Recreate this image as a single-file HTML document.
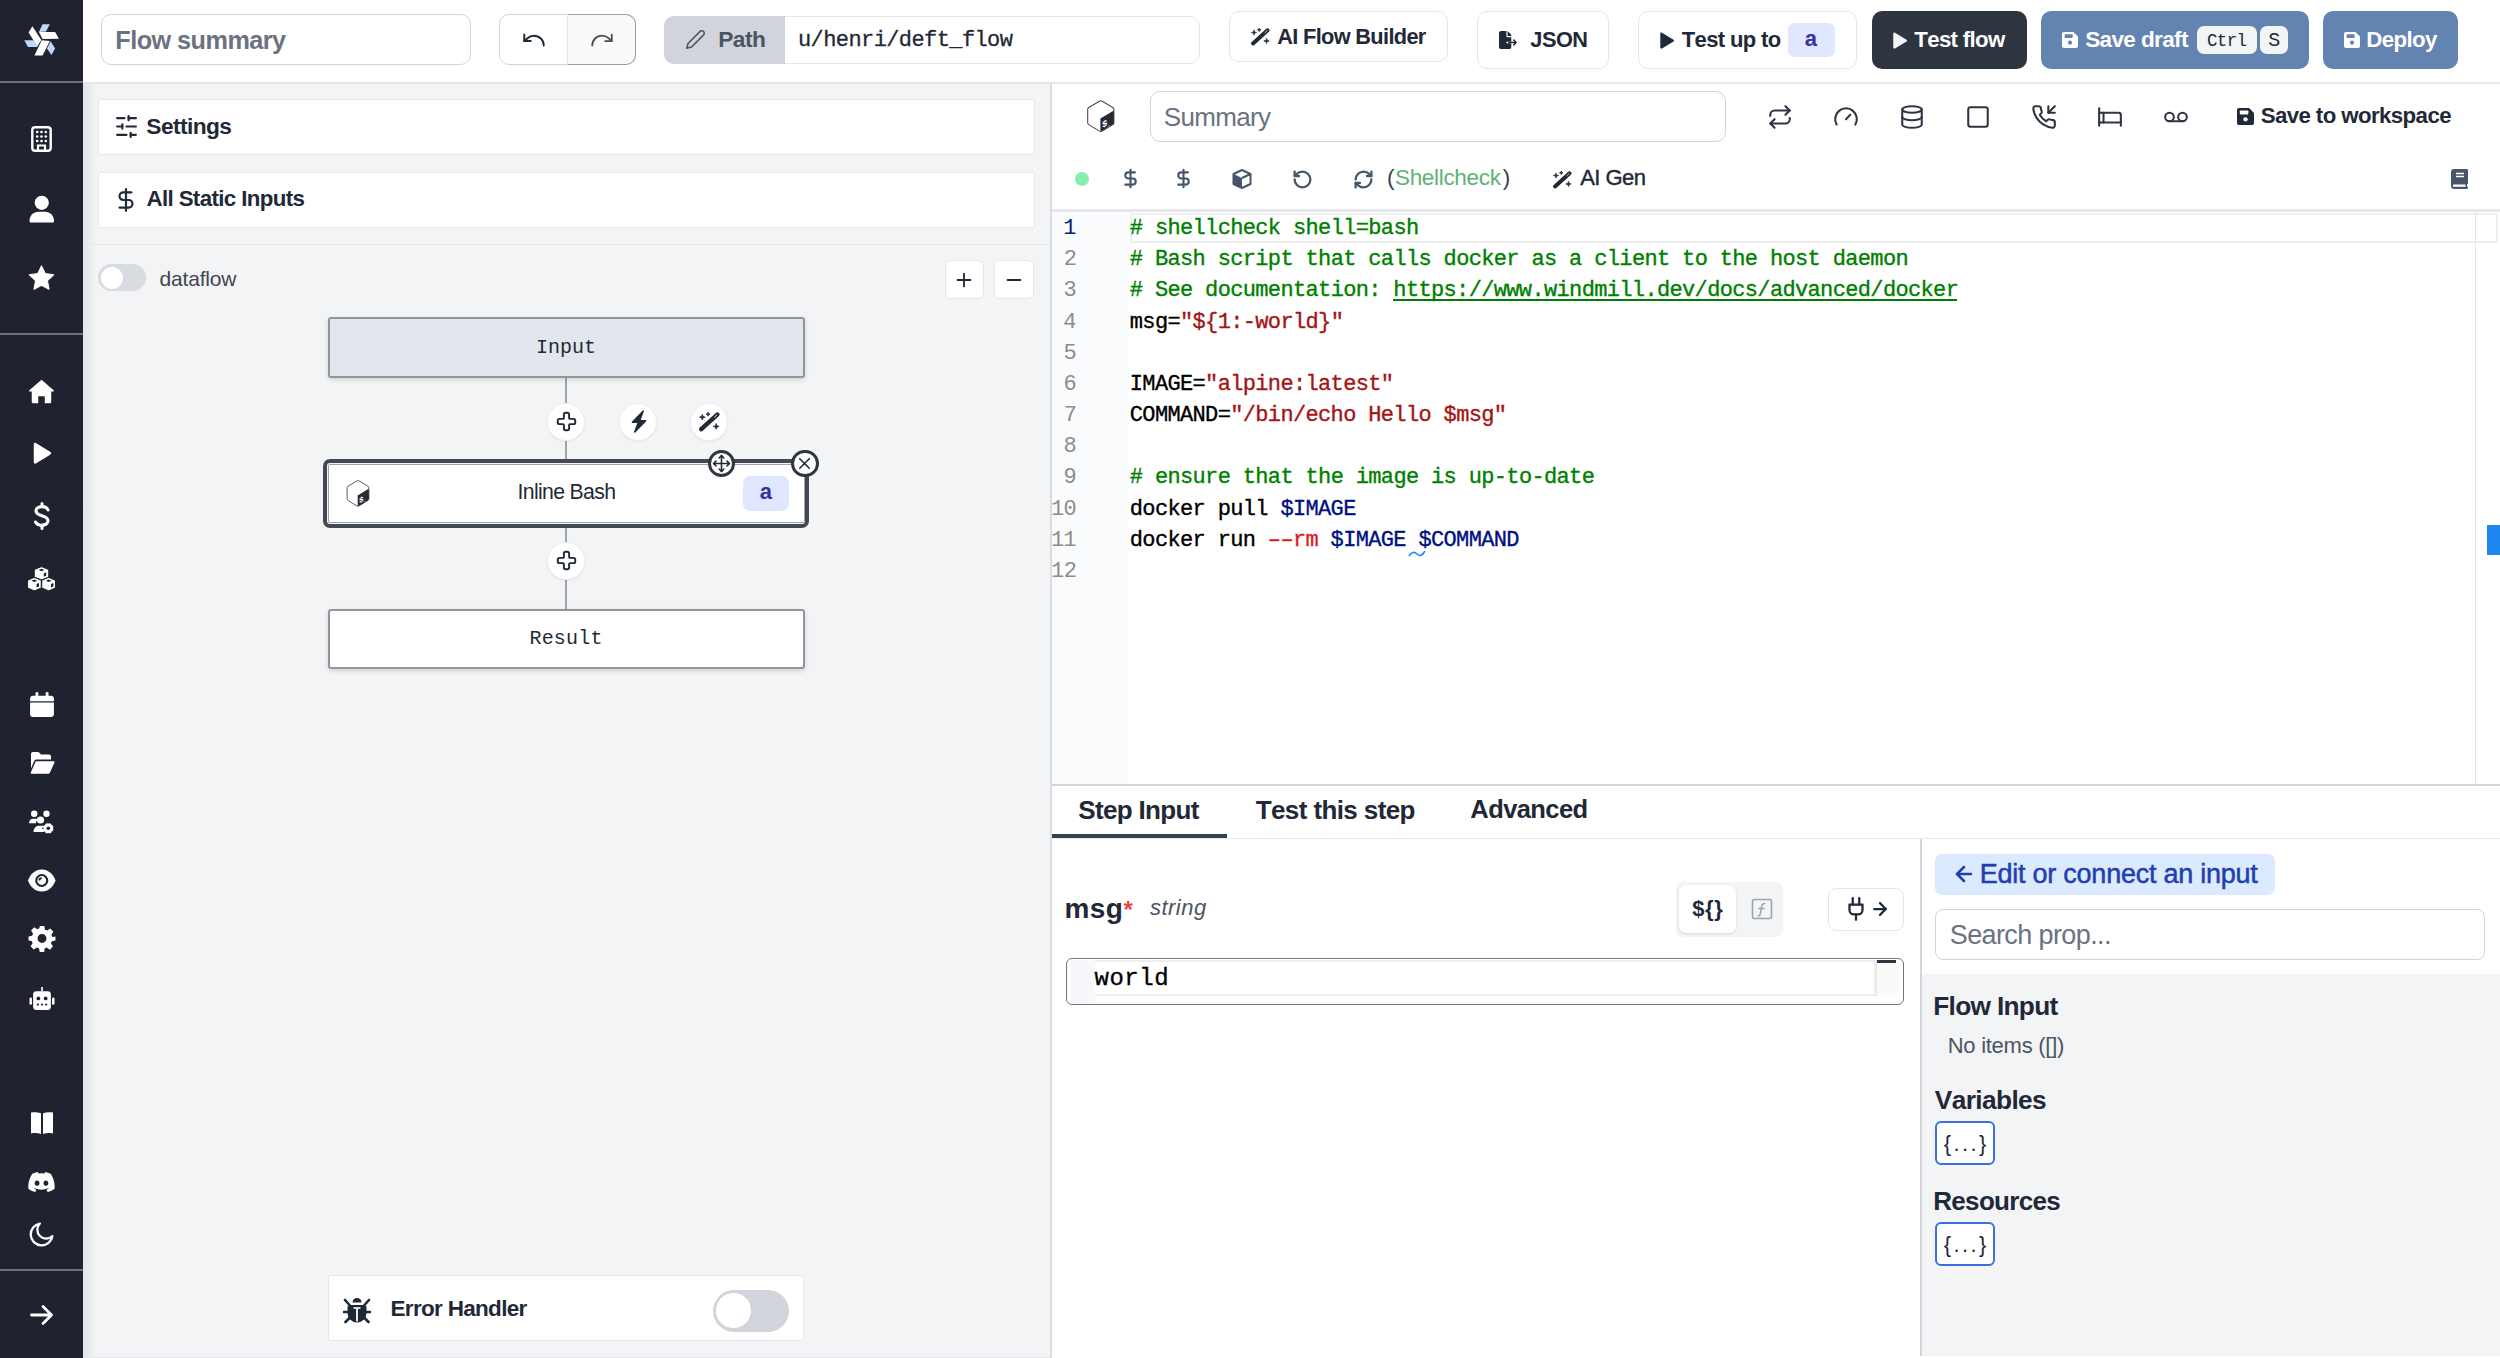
<!DOCTYPE html>
<html><head><meta charset="utf-8"><title>Flow editor</title>
<style>
*{margin:0;padding:0;box-sizing:border-box}
html,body{width:2500px;height:1358px;overflow:hidden;background:#fff;font-family:"Liberation Sans",sans-serif}
.t{position:absolute;white-space:pre;font-kerning:none}
.r{position:absolute;display:block}
</style></head><body>

<div class="r" style="left:0px;top:0px;width:2500px;height:1358px;background:#fff"></div>
<div class="r" style="left:83px;top:83px;width:967px;height:1275px;background:#f3f4f6"></div>
<div class="r" style="left:83px;top:83px;width:14px;height:1275px;background:linear-gradient(to right,rgba(0,0,0,.06),rgba(0,0,0,0))"></div>
<div class="r" style="left:1921px;top:974px;width:579px;height:382px;background:#f3f4f6"></div>
<div class="r" style="left:83px;top:82px;width:2417px;height:2px;background:#e5e7eb"></div>
<div class="r" style="left:1050px;top:84px;width:2px;height:1274px;background:#d9dce1"></div>
<div class="r" style="left:0px;top:0px;width:83px;height:1358px;background:#1f2330"></div>
<div class="r" style="left:0px;top:81px;width:83px;height:2px;background:#6b7080"></div>
<div class="r" style="left:0px;top:333px;width:83px;height:2px;background:#6b7080"></div>
<div class="r" style="left:0px;top:1269px;width:83px;height:2px;background:#6b7080"></div>
<svg class="r" style="left:15px;top:15px;width:55px;height:55px;" viewBox="0 0 1358 1358">
<g fill="#ffffff">
<polygon points="590,420 990,420 1085,585 680,595"/>
<polygon points="335,430 430,280 650,615 550,770"/>
<polygon points="660,625 860,640 680,1000 480,1000"/>
</g>
<g fill="#c4d7f7">
<polygon points="590,420 680,230 860,230 765,410"/>
<polygon points="230,625 470,625 560,790 320,790"/>
<polygon points="790,830 880,650 990,830 900,985"/>
</g></svg>
<svg class="r" style="left:31.0px;top:126.2px;width:21.0px;height:25.999999999999986px;" viewBox="0 0 21 26"><rect x="1.3" y="1.3" width="18.4" height="23.4" rx="2.8" fill="none" stroke="#fff" stroke-width="2.4"/>
<g fill="#fff"><circle cx="6.2" cy="6" r="1.3"/><circle cx="10.5" cy="6" r="1.3"/><circle cx="14.8" cy="6" r="1.3"/>
<circle cx="6.2" cy="10.5" r="1.3"/><circle cx="10.5" cy="10.5" r="1.3"/><circle cx="14.8" cy="10.5" r="1.3"/>
<circle cx="6.2" cy="15" r="1.3"/><circle cx="10.5" cy="15" r="1.3"/><circle cx="14.8" cy="15" r="1.3"/></g>
<path d="M7 25V19.5h7V25" fill="none" stroke="#fff" stroke-width="2.2"/></svg>
<svg class="r" style="left:28.75px;top:194.5px;width:25.5px;height:29.0px;" viewBox="0 0 25.5 28"><circle cx="12.75" cy="7.3" r="7.1" fill="#fff"/><path d="M0.5 25.5C0.5 20 4.5 16.2 9.5 16.2h6.5c5 0 9 3.8 9 9.3 0 1-.6 1.6-1.5 1.6H2c-.9 0-1.5-.6-1.5-1.6z" fill="#fff"/></svg>
<svg class="r" style="left:28.0px;top:264.6px;width:27.0px;height:26.0px;" viewBox="0 0 24 24"><path d="M12 0.8l3.4 7.1 7.8 1.1-5.7 5.5 1.4 7.8L12 18.6l-6.9 3.7 1.4-7.8L0.8 9l7.8-1.1z" fill="#fff" stroke="#fff" stroke-width="1" stroke-linejoin="round"/></svg>
<svg class="r" style="left:27.0px;top:377.5px;width:29.0px;height:26.0px;" viewBox="0 0 24 24"><path d="M12 1.5L0.8 11.2c-.5.5-.2 1.3.5 1.3H3V22c0 .8.6 1.4 1.4 1.4H9v-6.5h6v6.5h4.6c.8 0 1.4-.6 1.4-1.4v-9.5h1.7c.7 0 1-.8.5-1.3z" fill="#fff"/></svg>
<svg class="r" style="left:30.5px;top:440.2px;width:22.0px;height:26.0px;" viewBox="0 0 24 24"><path d="M3 2.2C3 1 4.3.3 5.3 1l16 10c.9.6.9 1.9 0 2.5l-16 10c-1 .6-2.3-.1-2.3-1.3z" fill="#fff"/></svg>
<svg class="r" style="left:32.8px;top:501.8px;width:18.0px;height:27.999999999999943px;" viewBox="0 0 18 28"><path d="M9 1.5v3M9 23.5v3" stroke="#fff" stroke-width="3" stroke-linecap="round"/><path d="M15 8C14.2 6 12.2 4.6 9 4.6c-3.6 0-6 1.8-6 4.4 0 6 12 3.3 12 9.6 0 2.7-2.5 4.6-6.2 4.6-3 0-5.3-1.2-6.2-3.2" fill="none" stroke="#fff" stroke-width="3.1" stroke-linecap="round"/></svg>
<svg class="r" style="left:27.2px;top:565.55px;width:29.000000000000004px;height:25.5px;" viewBox="0 0 29 25.5"><g fill="#fff" stroke="#1f2330" stroke-width="1.1" stroke-linejoin="round">
<path d="M14.5 0.6 21.8 3.6v7.6l-7.3 2.9-7.3-2.9V3.6z"/>
<path d="M7.3 11.3 14.3 14.3v7.7L7.3 24.9 0.5 22v-7.7z"/>
<path d="M21.7 11.3 28.5 14.3v7.7l-6.8 2.9-7-2.9v-7.7z"/></g>
<g fill="#1f2330"><path d="M14.5 2.8 17.4 4 14.5 5.2 11.6 4z"/><path d="M16.8 7.2 19.2 6.2v3.6l-2.4 1z"/>
<path d="M7.3 13.5 10.2 14.7 7.3 15.9 4.4 14.7z"/><path d="M9.6 17.9 12 16.9v3.6l-2.4 1z"/>
<path d="M21.7 13.5 24.6 14.7 21.7 15.9 18.8 14.7z"/><path d="M24 17.9 26.4 16.9v3.6l-2.4 1z"/></g></svg>
<svg class="r" style="left:28.5px;top:689.5px;width:26.0px;height:29.0px;" viewBox="0 0 24 24"><g fill="#fff"><rect x="6" y="0.5" width="2.6" height="5" rx="1.2"/><rect x="15.4" y="0.5" width="2.6" height="5" rx="1.2"/><path d="M1 6.5c0-1.4 1.1-2.5 2.5-2.5h17c1.4 0 2.5 1.1 2.5 2.5V9H1z"/><path d="M1 10.2h22v10.8c0 1.4-1.1 2.5-2.5 2.5h-17C2.1 23.5 1 22.4 1 21z"/></g></svg>
<svg class="r" style="left:26.5px;top:751.0px;width:30.0px;height:24.0px;" viewBox="0 0 24 24"><g fill="#fff"><path d="M1 3c0-1.1.9-2 2-2h5.5l2.5 2.5h8c1.1 0 2 .9 2 2v3H6.5c-1 0-1.9.6-2.3 1.5L1 17.5z"/><path d="M5.8 10.2h17.7c.8 0 1.3.8.9 1.5l-4.6 10c-.3.6-1 1-1.7 1H1.5c-.6 0-1-.6-.7-1.2z"/></g></svg>
<svg class="r" style="left:27.0px;top:809.5px;width:29.0px;height:25.0px;" viewBox="0 0 25 25"><g fill="#fff"><circle cx="5.2" cy="3.8" r="3.2"/><circle cx="17.5" cy="3.8" r="3.2"/><path d="M0 13c0-2.5 1.8-4.3 4-4.3h2.6c.8 0 1.5.2 2.1.6-1 1-1.6 2.4-1.6 3.9H0z"/>
<circle cx="11.5" cy="10" r="3.6"/><path d="M4.5 22c0-3.6 2.6-6.3 5.6-6.3h3.4c.5 0 1 .1 1.5.2-.4 1.8 0 3.8 1.3 5.3-.5.3-.7.6-.7.8z"/>
<circle cx="19.3" cy="18.3" r="5.2"/></g><circle cx="19.3" cy="18.3" r="1.8" fill="#1f2330"/>
<g stroke="#1f2330" stroke-width="1.3"><path d="M19.3 12.2v1.4M19.3 23v1.4M13.2 18.3h1.4M24 18.3h1.4M15 14l1 1M22.6 21.6l1 1M15 22.6l1-1M22.6 15l1-1"/></g></svg>
<svg class="r" style="left:26.75px;top:866.5px;width:29.5px;height:27.0px;" viewBox="0 0 24 22"><path d="M12 2C6.5 2 2.5 6 0.8 11c1.7 5 5.7 9 11.2 9s9.5-4 11.2-9C21.5 6 17.5 2 12 2z" fill="#fff"/><circle cx="12" cy="11" r="5.3" fill="#1f2330"/><circle cx="12" cy="11" r="3.6" fill="#fff"/><path d="M10 11a2 2 0 0 1 2-2" stroke="#1f2330" stroke-width="1.4" fill="none"/></svg>
<svg class="r" style="left:27.5px;top:925.4px;width:28.0px;height:28.0px;" viewBox="0 0 24 25"><path fill="#fff" fill-rule="evenodd" d="M10 1h4l.7 3.2 1.9.8 2.8-1.8 2.8 2.8-1.8 2.8.8 1.9L24 10.2v3.6l-3.2.7-.8 1.9 1.8 2.8-2.8 2.8-2.8-1.8-1.9.8L14 24h-4l-.7-3.2-1.9-.8-2.8 1.8-2.8-2.8 1.8-2.8-.8-1.9L0 13.8v-3.6l3.2-.7.8-1.9L2.2 4.8 5 2l2.8 1.8 1.9-.8zM12 8a4 4 0 1 0 0 8 4 4 0 0 0 0-8z"/></svg>
<svg class="r" style="left:26.5px;top:986.8px;width:30.0px;height:24.0px;" viewBox="0 0 24 23"><g fill="#fff"><rect x="11.2" y="0" width="1.6" height="4"/><rect x="3.5" y="4" width="17" height="18" rx="3"/><rect x="0" y="10" width="2.4" height="7" rx="1.2"/><rect x="21.6" y="10" width="2.4" height="7" rx="1.2"/></g><g fill="#1f2330"><circle cx="8.5" cy="11" r="1.8"/><circle cx="15.5" cy="11" r="1.8"/><rect x="7" y="16" width="2" height="1.6"/><rect x="11" y="16" width="2" height="1.6"/><rect x="15" y="16" width="2" height="1.6"/></g></svg>
<svg class="r" style="left:26.7px;top:1111.0px;width:30.000000000000004px;height:24.0px;" viewBox="0 0 24 24"><g fill="#fff"><path d="M1 1.5c3.5-.6 7-.4 10 .8V23c-3-1.1-6.5-1.3-10-.6z"/><path d="M13 2.3c3-1.2 6.5-1.4 10-.8v20.9c-3.5-.7-7-.5-10 .6z"/></g></svg>
<svg class="r" style="left:28.2px;top:1171.9px;width:27.000000000000004px;height:21.0px;" viewBox="0 0 24 19"><path fill="#fff" d="M20.3 1.6A19.6 19.6 0 0 0 15.4 0c-.2.4-.5.9-.6 1.3a18.3 18.3 0 0 0-5.5 0C9.1.9 8.8.4 8.6 0 6.9.3 5.2.8 3.7 1.6 .6 6.3-.3 10.8.1 15.2c2 1.5 4 2.4 6 3 .5-.6.9-1.3 1.3-2-.7-.3-1.4-.6-2-1l.5-.4c3.9 1.8 8.2 1.8 12.1 0l.5.4c-.6.4-1.3.7-2 1 .4.7.8 1.4 1.3 2 2-.6 4-1.5 6-3 .5-5.1-.9-9.6-3.5-13.6zM8 12.5c-1.2 0-2.2-1.1-2.2-2.4S6.8 7.7 8 7.7s2.2 1.1 2.2 2.4-1 2.4-2.2 2.4zm8 0c-1.2 0-2.2-1.1-2.2-2.4s1-2.4 2.2-2.4 2.2 1.1 2.2 2.4-1 2.4-2.2 2.4z"/></svg>
<svg class="r" style="left:29.2px;top:1221.9px;width:25.000000000000004px;height:25.0px;" viewBox="0 0 24 24"><path d="M10.5 1.5A10.5 10.5 0 1 0 22.5 13.5 8 8 0 0 1 10.5 1.5z" fill="none" stroke="#fff" stroke-width="2.2" stroke-linejoin="round"/></svg>
<svg class="r" style="left:28.7px;top:1303.5px;width:26.000000000000004px;height:22.0px;" viewBox="0 0 24 22"><path d="M1.5 11h20M13 2.5l8.5 8.5-8.5 8.5" fill="none" stroke="#fff" stroke-width="2.8" stroke-linecap="round" stroke-linejoin="round"/></svg>
<div class="r" style="left:101px;top:14px;width:370px;height:51px;background:#fff;border:1.5px solid #d1d5db;border-radius:10px;"></div>
<div class="t" style="left:115.31px;top:28.03px;font-size:25.25px;line-height:25.25px;color:#6b7280;font-family:'Liberation Sans',sans-serif;font-weight:700;letter-spacing:-0.543px;">Flow summary</div>
<div class="r" style="left:499px;top:14px;width:137px;height:51px;background:#fff;border:1.5px solid #d1d5db;border-radius:10px;"></div>
<div class="r" style="left:567px;top:14px;width:69px;height:51px;background:#fafafa;border:1.5px solid #9a9da3;border-left-color:#e5e7eb;border-radius:0 10px 10px 0"></div>
<svg class="r" style="left:521.0px;top:27.0px;width:26.0px;height:26.0px;" viewBox="0 0 24 24"><g fill="none" stroke="#1f2937" stroke-width="1.8" stroke-linecap="round" stroke-linejoin="round"><path d="M3 7v6h6"/><path d="M21 17a9 9 0 0 0-9-9 9 9 0 0 0-6 2.3L3 13"/></g></svg>
<svg class="r" style="left:588.5px;top:27.0px;width:26.0px;height:26.0px;" viewBox="0 0 24 24"><g fill="none" stroke="#4a4d52" stroke-width="1.7" stroke-linecap="round" stroke-linejoin="round"><path d="M21 7v6h-6"/><path d="M3 17a9 9 0 0 1 9-9 9 9 0 0 1 6 2.3l3 2.7"/></g></svg>
<div class="r" style="left:664px;top:16px;width:536px;height:48px;background:#fff;border:1.5px solid #e5e7eb;border-radius:10px;"></div>
<div class="r" style="left:664px;top:16px;width:121px;height:48px;background:#d1d5db;border-radius:10px 0 0 10px"></div>
<svg class="r" style="left:684.5px;top:29.0px;width:21.0px;height:21.0px;" viewBox="0 0 24 24"><g fill="none" stroke="#4b5563" stroke-width="1.8" stroke-linecap="round" stroke-linejoin="round"><path d="M17 3a2.85 2.83 0 1 1 4 4L7.5 20.5 2 22l1.5-5.5Z"/></g></svg>
<div class="t" style="left:718.18px;top:28.04px;font-size:22.75px;line-height:22.75px;color:#4b5563;font-family:'Liberation Sans',sans-serif;font-weight:700;letter-spacing:-0.555px;">Path</div>
<div class="t" style="left:798.01px;top:30.44px;font-size:22px;line-height:22px;color:#1f2937;font-family:'Liberation Mono',monospace;letter-spacing:-0.595px;-webkit-text-stroke:0.3px #1f2937;">u/henri/deft_flow</div>
<div class="r" style="left:1229px;top:11px;width:219px;height:51px;background:#fff;border:1.5px solid #e5e7eb;border-radius:10px;"></div>
<svg class="r" style="left:1250.5px;top:27.2px;width:19.0px;height:19.000000000000004px;" viewBox="0 0 24 24"><path d="M2.6 20.8 20.9 4.1" stroke="#1f2937" stroke-width="5" stroke-linecap="round"/><path d="M17.6 7.2 20.4 4.6" stroke="#fff" stroke-width="1.1" stroke-linecap="round" opacity=".85"/><g fill="#1f2937" stroke="#1f2937" stroke-width=".9" stroke-linejoin="round"><path d="M3.8 3.7Q3.8 7 7.1 7Q3.8 7 3.8 10.3Q3.8 7 0.5 7Q3.8 7 3.8 3.7Z"/><path d="M10.4 1.3000000000000003Q10.4 3.6 12.7 3.6Q10.4 3.6 10.4 5.9Q10.4 3.6 8.100000000000001 3.6Q10.4 3.6 10.4 1.3000000000000003Z"/><path d="M19.6 14.200000000000001Q19.6 17.6 23.0 17.6Q19.6 17.6 19.6 21.0Q19.6 17.6 16.200000000000003 17.6Q19.6 17.6 19.6 14.200000000000001Z"/></g></svg>
<div class="t" style="left:1277.16px;top:25.79px;font-size:21.75px;line-height:21.75px;color:#1f2937;font-family:'Liberation Sans',sans-serif;font-weight:700;letter-spacing:-0.652px;">AI Flow Builder</div>
<div class="r" style="left:1477px;top:11px;width:132px;height:58px;background:#fff;border:1.5px solid #e5e7eb;border-radius:10px;"></div>
<svg class="r" style="left:1498px;top:31px;width:20px;height:18px;" viewBox="0 0 24 22"><path fill="#1f2937" d="M1 2.5C1 1.1 2.1 0 3.5 0H10v6c0 .8.7 1.5 1.5 1.5H16v5.5h-5.2a1 1 0 0 0 0 2H16V19.5c0 1.4-1.1 2.5-2.5 2.5h-10C2.1 22 1 20.9 1 19.5z"/><path fill="#1f2937" d="M11.5 0 16 4.5v1.5h-4.5z"/><path d="M13 14h9m-3-3 3 3-3 3" fill="none" stroke="#1f2937" stroke-width="1.8" stroke-linecap="round" stroke-linejoin="round"/></svg>
<div class="t" style="left:1530.37px;top:29.19px;font-size:21.75px;line-height:21.75px;color:#1f2937;font-family:'Liberation Sans',sans-serif;font-weight:700;letter-spacing:-0.511px;">JSON</div>
<div class="r" style="left:1638px;top:11px;width:219px;height:58px;background:#fff;border:1.5px solid #e5e7eb;border-radius:10px;"></div>
<svg class="r" style="left:1659px;top:31.5px;width:16px;height:17.299999999999997px;" viewBox="0 0 16 18"><path d="M1 1.8C1 .9 2 .3 2.8.8l12 7.3c.7.4.7 1.5 0 1.9l-12 7.3C2 17.7 1 17.1 1 16.2z" fill="#1f2937"/></svg>
<div class="t" style="left:1681.75px;top:28.98px;font-size:22.0px;line-height:22.0px;color:#1f2937;font-family:'Liberation Sans',sans-serif;font-weight:700;letter-spacing:-0.633px;">Test up to</div>
<div class="r" style="left:1788px;top:23px;width:47px;height:33.7px;background:#e0e7ff;border:0px solid #e0e7ff;border-radius:7px;"></div>
<div class="t" style="left:1804.86px;top:28.18px;font-size:22px;line-height:22px;color:#3730a3;font-family:'Liberation Sans',sans-serif;font-weight:700;">a</div>
<div class="r" style="left:1871.5px;top:11px;width:155.5px;height:58px;background:#2e3440;border:0px solid #2e3440;border-radius:10px;"></div>
<svg class="r" style="left:1892px;top:31.5px;width:16px;height:17.299999999999997px;" viewBox="0 0 16 18"><path d="M1 1.8C1 .9 2 .3 2.8.8l12 7.3c.7.4.7 1.5 0 1.9l-12 7.3C2 17.7 1 17.1 1 16.2z" fill="#f3f4f6"/></svg>
<div class="t" style="left:1914.25px;top:28.77px;font-size:22.25px;line-height:22.25px;color:#ffffff;font-family:'Liberation Sans',sans-serif;font-weight:700;letter-spacing:-0.664px;">Test flow</div>
<div class="r" style="left:2041px;top:11px;width:268px;height:58px;background:#6384b1;border:0px solid #6384b1;border-radius:10px;"></div>
<svg class="r" style="left:2061px;top:32px;width:18px;height:16px;" viewBox="0 0 18 18"><path fill="#ffffff" d="M0 2.2C0 1 1 0 2.2 0h10.6L18 5.2v10.6c0 1.2-1 2.2-2.2 2.2H2.2C1 18 0 17 0 15.8z"/><rect x="3" y="2.6" width="9" height="4.2" rx=".8" fill="#6384b1"/><circle cx="9" cy="12" r="2.3" fill="#6384b1"/></svg>
<div class="t" style="left:2085.15px;top:28.55px;font-size:22.5px;line-height:22.5px;color:#ffffff;font-family:'Liberation Sans',sans-serif;font-weight:700;letter-spacing:-0.608px;">Save draft</div>
<div class="r" style="left:2197px;top:26px;width:60px;height:28px;background:#f3f4f6;border:0px solid #f3f4f6;border-radius:7px;"></div>
<div class="t" style="left:2207.03px;top:33.09px;font-size:17.5px;line-height:17.5px;color:#1f2937;font-family:'Liberation Mono',monospace;letter-spacing:-0.692px;">Ctrl</div>
<div class="r" style="left:2260px;top:26px;width:28px;height:28px;background:#f3f4f6;border:0px solid #f3f4f6;border-radius:7px;"></div>
<div class="t" style="left:2268.23px;top:31.18px;font-size:20px;line-height:20px;color:#1f2937;font-family:'Liberation Mono',monospace;">S</div>
<div class="r" style="left:2323px;top:11px;width:135px;height:58px;background:#6384b1;border:0px solid #6384b1;border-radius:10px;"></div>
<svg class="r" style="left:2343px;top:32px;width:18px;height:16px;" viewBox="0 0 18 18"><path fill="#ffffff" d="M0 2.2C0 1 1 0 2.2 0h10.6L18 5.2v10.6c0 1.2-1 2.2-2.2 2.2H2.2C1 18 0 17 0 15.8z"/><rect x="3" y="2.6" width="9" height="4.2" rx=".8" fill="#6384b1"/><circle cx="9" cy="12" r="2.3" fill="#6384b1"/></svg>
<div class="t" style="left:2366.21px;top:28.77px;font-size:22.25px;line-height:22.25px;color:#ffffff;font-family:'Liberation Sans',sans-serif;font-weight:700;letter-spacing:-0.595px;">Deploy</div>
<div class="r" style="left:98px;top:99px;width:936.5px;height:56px;background:#fff;border:1.5px solid #e5e7eb;border-radius:3px;"></div>
<svg class="r" style="left:113.5px;top:114.0px;width:25.0px;height:25.0px;" viewBox="0 0 24 24"><g fill="none" stroke="#1f2937" stroke-width="2.1" stroke-linecap="round" stroke-linejoin="round"><line x1="21" x2="14" y1="4" y2="4"/><line x1="10" x2="3" y1="4" y2="4"/><line x1="21" x2="12" y1="12" y2="12"/><line x1="8" x2="3" y1="12" y2="12"/><line x1="21" x2="16" y1="20" y2="20"/><line x1="12" x2="3" y1="20" y2="20"/><line x1="14" x2="14" y1="2" y2="6"/><line x1="8" x2="8" y1="10" y2="14"/><line x1="16" x2="16" y1="18" y2="22"/></g></svg>
<div class="t" style="left:146.34px;top:114.74px;font-size:22.75px;line-height:22.75px;color:#1f2937;font-family:'Liberation Sans',sans-serif;font-weight:700;letter-spacing:-0.594px;">Settings</div>
<div class="r" style="left:98px;top:172px;width:936.5px;height:56px;background:#fff;border:1.5px solid #e5e7eb;border-radius:3px;"></div>
<svg class="r" style="left:113.0px;top:186.5px;width:26.0px;height:26.0px;" viewBox="0 0 24 24"><g fill="none" stroke="#1f2937" stroke-width="2" stroke-linecap="round" stroke-linejoin="round"><line x1="12" x2="12" y1="2" y2="22"/><path d="M17 5H9.5a3.5 3.5 0 0 0 0 7h5a3.5 3.5 0 0 1 0 7H6"/></g></svg>
<div class="t" style="left:146.45px;top:187.87px;font-size:22.25px;line-height:22.25px;color:#1f2937;font-family:'Liberation Sans',sans-serif;font-weight:700;letter-spacing:-0.604px;">All Static Inputs</div>
<div class="r" style="left:83px;top:243.5px;width:967px;height:1.5px;background:#e5e7eb"></div>
<div class="r" style="left:98px;top:264px;width:48px;height:27px;background:#d8dbe0;border-radius:14px"></div>
<div class="r" style="left:100.5px;top:266.5px;width:22px;height:22px;background:#fff;border-radius:11px"></div>
<div class="t" style="left:159.62px;top:267.72px;font-size:21px;line-height:21px;color:#404652;font-family:'Liberation Sans',sans-serif;letter-spacing:-0.198px;">dataflow</div>
<div class="r" style="left:944.5px;top:260px;width:39.5px;height:39px;background:#fff;border:1.5px solid #e5e7eb;border-radius:6px;"></div>
<svg class="r" style="left:953.2px;top:268.5px;width:22.0px;height:22.0px;" viewBox="0 0 24 24"><g fill="none" stroke="#1f2937" stroke-width="2" stroke-linecap="round" stroke-linejoin="round"><path d="M5 12h14"/><path d="M12 5v14"/></g></svg>
<div class="r" style="left:993.5px;top:260px;width:40.0px;height:39px;background:#fff;border:1.5px solid #e5e7eb;border-radius:6px;"></div>
<svg class="r" style="left:1002.5px;top:268.5px;width:22.0px;height:22.0px;" viewBox="0 0 24 24"><g fill="none" stroke="#1f2937" stroke-width="2" stroke-linecap="round" stroke-linejoin="round"><path d="M5 12h14"/></g></svg>
<div class="r" style="left:565.2px;top:377px;width:1.599999999999909px;height:82px;background:#a0a5ad"></div>
<div class="r" style="left:565.2px;top:527px;width:1.599999999999909px;height:82px;background:#a0a5ad"></div>
<div class="r" style="left:328px;top:317px;width:476.5px;height:60.5px;background:#e2e6ed;border:2px solid #91959c;border-radius:3px;box-shadow:0 2px 5px rgba(0,0,0,.14)"></div>
<div class="t" style="left:536.03px;top:337.68px;font-size:20px;line-height:20px;color:#1f2937;font-family:'Liberation Mono',monospace;">Input</div>
<div class="r" style="left:328px;top:609px;width:476.5px;height:59.5px;background:#fff;border:2px solid #91959c;border-radius:3px;box-shadow:0 2px 5px rgba(0,0,0,.14)"></div>
<div class="t" style="left:529.42px;top:629.38px;font-size:20px;line-height:20px;color:#1f2937;font-family:'Liberation Mono',monospace;letter-spacing:0.228px;">Result</div>
<div class="r" style="left:547.00px;top:402.70px;width:38px;height:38px;background:#fff;border:1.5px solid #eceef1;border-radius:50%;box-shadow:0 1px 2px rgba(0,0,0,.06)"></div>
<svg class="r" style="left:555.5px;top:411.2px;width:21.0px;height:21.0px;" viewBox="0 0 24 24"><g fill="none" stroke="#1f2937" stroke-width="2.2" stroke-linecap="round" stroke-linejoin="round"><path d="M4 9a2 2 0 0 0-2 2v2a2 2 0 0 0 2 2h4a1 1 0 0 1 1 1v4a2 2 0 0 0 2 2h2a2 2 0 0 0 2-2v-4a1 1 0 0 1 1-1h4a2 2 0 0 0 2-2v-2a2 2 0 0 0-2-2h-4a1 1 0 0 1-1-1V4a2 2 0 0 0-2-2h-2a2 2 0 0 0-2 2v4a1 1 0 0 1-1 1z"/></g></svg>
<div class="r" style="left:547.00px;top:541.70px;width:38px;height:38px;background:#fff;border:1.5px solid #eceef1;border-radius:50%;box-shadow:0 1px 2px rgba(0,0,0,.06)"></div>
<svg class="r" style="left:555.5px;top:550.2px;width:21.0px;height:21.0px;" viewBox="0 0 24 24"><g fill="none" stroke="#1f2937" stroke-width="2.2" stroke-linecap="round" stroke-linejoin="round"><path d="M4 9a2 2 0 0 0-2 2v2a2 2 0 0 0 2 2h4a1 1 0 0 1 1 1v4a2 2 0 0 0 2 2h2a2 2 0 0 0 2-2v-4a1 1 0 0 1 1-1h4a2 2 0 0 0 2-2v-2a2 2 0 0 0-2-2h-4a1 1 0 0 1-1-1V4a2 2 0 0 0-2-2h-2a2 2 0 0 0-2 2v4a1 1 0 0 1-1 1z"/></g></svg>
<div class="r" style="left:619.00px;top:402.70px;width:38px;height:38px;background:#fff;border:1.5px solid #eceef1;border-radius:50%;box-shadow:0 1px 2px rgba(0,0,0,.06)"></div>
<svg class="r" style="left:629px;top:410px;width:18px;height:23px;" viewBox="0 0 18 23"><path d="M13.8 0.5 3 11.5c-.6.6-.2 1.6.7 1.6h4.6L5 21.8c-.3.8.7 1.4 1.3.8L17 11.6c.6-.6.2-1.6-.7-1.6h-4.6l3.2-8.8c.3-.8-.7-1.4-1.1-.7z" fill="#1f2937"/></svg>
<div class="r" style="left:690.00px;top:402.70px;width:38px;height:38px;background:#fff;border:1.5px solid #eceef1;border-radius:50%;box-shadow:0 1px 2px rgba(0,0,0,.06)"></div>
<svg class="r" style="left:698.5px;top:411.2px;width:21.0px;height:21.0px;" viewBox="0 0 24 24"><path d="M2.6 20.8 20.9 4.1" stroke="#1f2937" stroke-width="5" stroke-linecap="round"/><path d="M17.6 7.2 20.4 4.6" stroke="#fff" stroke-width="1.1" stroke-linecap="round" opacity=".85"/><g fill="#1f2937" stroke="#1f2937" stroke-width=".9" stroke-linejoin="round"><path d="M3.8 3.7Q3.8 7 7.1 7Q3.8 7 3.8 10.3Q3.8 7 0.5 7Q3.8 7 3.8 3.7Z"/><path d="M10.4 1.3000000000000003Q10.4 3.6 12.7 3.6Q10.4 3.6 10.4 5.9Q10.4 3.6 8.100000000000001 3.6Q10.4 3.6 10.4 1.3000000000000003Z"/><path d="M19.6 14.200000000000001Q19.6 17.6 23.0 17.6Q19.6 17.6 19.6 21.0Q19.6 17.6 16.200000000000003 17.6Q19.6 17.6 19.6 14.200000000000001Z"/></g></svg>
<div class="r" style="left:323px;top:459px;width:486px;height:68.5px;border:4px solid #434a55;border-radius:7px"></div>
<div class="r" style="left:327.5px;top:463.5px;width:477.5px;height:59.5px;background:#fff;border:1.5px solid #9ca3af;border-radius:2px;"></div>
<svg class="r" style="left:345.5px;top:479.5px;width:24.0px;height:27.0px;" viewBox="0 0 28 33"><path d="M12.6 1.2Q14 .4 15.4 1.2L26.2 7.6Q27.3 8.3 27.3 9.6V23Q27.3 24.4 26.2 25L15.4 31.6Q14 32.4 12.6 31.6L1.8 25Q.7 24.4 .7 23V9.6Q.7 8.3 1.8 7.6Z" fill="#fff" stroke="#4a4a4a" stroke-width="1.1"/><path d="M13.6 18.8 26 11.4Q27.3 10.7 27.3 12.2V23Q27.3 24.4 26.2 25L15.2 31.6Q13.6 32.5 13.6 30.8Z" fill="#262b33"/><g transform="translate(15.5 28.5) skewY(-28)"><text x="0" y="0" font-family="Liberation Sans" font-size="9" font-weight="700" fill="#fff">$</text></g><path d="M21 27.2 23.6 25.7" stroke="#9aa0a6" stroke-width=".9"/></svg>
<div class="t" style="left:517.54px;top:482.31px;font-size:21.25px;line-height:21.25px;color:#1f2937;font-family:'Liberation Sans',sans-serif;letter-spacing:-0.670px;">Inline Bash</div>
<div class="r" style="left:743px;top:476px;width:46px;height:34.60000000000002px;background:#e0e7ff;border:0px solid #e0e7ff;border-radius:7px;"></div>
<div class="t" style="left:759.86px;top:481.38px;font-size:22px;line-height:22px;color:#3730a3;font-family:'Liberation Sans',sans-serif;font-weight:700;">a</div>
<div class="r" style="left:707.55px;top:449.75px;width:27.5px;height:27.5px;background:#fff;border:3px solid #30363f;border-radius:50%;"></div>
<svg class="r" style="left:711.8px;top:454.0px;width:19.0px;height:19.0px;" viewBox="0 0 24 24"><g fill="none" stroke="#1f2937" stroke-width="2" stroke-linecap="round" stroke-linejoin="round"><polyline points="5 9 2 12 5 15"/><polyline points="9 5 12 2 15 5"/><polyline points="15 19 12 22 9 19"/><polyline points="19 9 22 12 19 15"/><line x1="2" x2="22" y1="12" y2="12"/><line x1="12" x2="12" y1="2" y2="22"/></g></svg>
<div class="r" style="left:791.05px;top:449.75px;width:27.5px;height:27.5px;background:#fff;border:3px solid #30363f;border-radius:50%;"></div>
<svg class="r" style="left:795.1px;top:454.0px;width:19.0px;height:19.0px;" viewBox="0 0 24 24"><g fill="none" stroke="#1f2937" stroke-width="2" stroke-linecap="round" stroke-linejoin="round"><path d="M18 6 6 18"/><path d="m6 6 12 12"/></g></svg>
<div class="r" style="left:328px;top:1275px;width:475.5px;height:66px;background:#fff;border:1.5px solid #e5e7eb;border-radius:3px;"></div>
<svg class="r" style="left:343px;top:1296px;width:28px;height:28px;" viewBox="0 0 28 28"><g fill="#1f2937"><path d="M9.5 6.5a4.5 4.5 0 0 1 9 0z"/><path d="M7 9h14c1.4 0 2.5 1.1 2.5 2.5V17a9.5 9.5 0 0 1-19 0v-5.5C4.5 10.1 5.6 9 7 9z"/></g><g stroke="#1f2937" stroke-width="2.6" stroke-linecap="round"><path d="M2 4l4.5 5M26 4l-4.5 5M1 16h4M27 16h-4M2.5 26l4-4M25.5 26l-4-4"/></g><path d="M14 12.5v13" stroke="#fff" stroke-width="1.8"/><path d="M10.5 12h7" stroke="#fff" stroke-width="1.6"/></svg>
<div class="t" style="left:390.49px;top:1297.95px;font-size:22.5px;line-height:22.5px;color:#1f2937;font-family:'Liberation Sans',sans-serif;font-weight:700;letter-spacing:-0.683px;">Error Handler</div>
<div class="r" style="left:712.5px;top:1290px;width:76.5px;height:42px;background:#d1d5db;border-radius:21px"></div>
<div class="r" style="left:714.5px;top:1292px;width:37px;height:37px;background:#fff;border:1.5px solid #d1d5db;border-radius:50%"></div>
<svg class="r" style="left:1087px;top:100px;width:27.59999999999991px;height:32.5px;" viewBox="0 0 28 33"><path d="M12.6 1.2Q14 .4 15.4 1.2L26.2 7.6Q27.3 8.3 27.3 9.6V23Q27.3 24.4 26.2 25L15.4 31.6Q14 32.4 12.6 31.6L1.8 25Q.7 24.4 .7 23V9.6Q.7 8.3 1.8 7.6Z" fill="#fff" stroke="#4a4a4a" stroke-width="1.1"/><path d="M13.6 18.8 26 11.4Q27.3 10.7 27.3 12.2V23Q27.3 24.4 26.2 25L15.2 31.6Q13.6 32.5 13.6 30.8Z" fill="#262b33"/><g transform="translate(15.5 28.5) skewY(-28)"><text x="0" y="0" font-family="Liberation Sans" font-size="9" font-weight="700" fill="#fff">$</text></g><path d="M21 27.2 23.6 25.7" stroke="#9aa0a6" stroke-width=".9"/></svg>
<div class="r" style="left:1150px;top:91px;width:576px;height:51px;background:#fff;border:1.5px solid #d1d5db;border-radius:10px;"></div>
<div class="t" style="left:1163.82px;top:103.99px;font-size:26.0px;line-height:26.0px;color:#6b7280;font-family:'Liberation Sans',sans-serif;letter-spacing:-0.667px;">Summary</div>
<svg class="r" style="left:1767.4px;top:103.5px;width:26.0px;height:26.0px;" viewBox="0 0 24 24"><g fill="none" stroke="#2e3440" stroke-width="1.9" stroke-linecap="round" stroke-linejoin="round"><path d="m17 2 4 4-4 4"/><path d="M3 11v-1a4 4 0 0 1 4-4h14"/><path d="m7 22-4-4 4-4"/><path d="M21 13v1a4 4 0 0 1-4 4H3"/></g></svg>
<svg class="r" style="left:1833.0px;top:103.5px;width:26.0px;height:26.0px;" viewBox="0 0 24 24"><g fill="none" stroke="#2e3440" stroke-width="1.9" stroke-linecap="round" stroke-linejoin="round"><path d="m12 14 4-4"/><path d="M3.34 19a10 10 0 1 1 17.32 0"/></g></svg>
<svg class="r" style="left:1899.0px;top:103.5px;width:26.0px;height:26.0px;" viewBox="0 0 24 24"><g fill="none" stroke="#2e3440" stroke-width="1.9" stroke-linecap="round" stroke-linejoin="round"><ellipse cx="12" cy="5" rx="9" ry="3"/><path d="M3 5V19A9 3 0 0 0 21 19V5"/><path d="M3 12A9 3 0 0 0 21 12"/></g></svg>
<svg class="r" style="left:1965.0px;top:103.5px;width:26.0px;height:26.0px;" viewBox="0 0 24 24"><g fill="none" stroke="#2e3440" stroke-width="1.9" stroke-linecap="round" stroke-linejoin="round"><rect width="18" height="18" x="3" y="3" rx="2"/></g></svg>
<svg class="r" style="left:2031.0px;top:103.5px;width:26.0px;height:26.0px;" viewBox="0 0 24 24"><g fill="none" stroke="#2e3440" stroke-width="1.9" stroke-linecap="round" stroke-linejoin="round"><polyline points="16 2 16 8 22 8"/><line x1="22" x2="16" y1="2" y2="8"/><path d="M22 16.92v3a2 2 0 0 1-2.18 2 19.79 19.79 0 0 1-8.63-3.07 19.5 19.5 0 0 1-6-6 19.79 19.79 0 0 1-3.07-8.67A2 2 0 0 1 4.11 2h3a2 2 0 0 1 2 1.72 12.84 12.84 0 0 0 .7 2.81 2 2 0 0 1-.45 2.11L8.09 9.91a16 16 0 0 0 6 6l1.27-1.27a2 2 0 0 1 2.11-.45 12.84 12.84 0 0 0 2.81.7A2 2 0 0 1 22 16.92z"/></g></svg>
<svg class="r" style="left:2097.0px;top:103.5px;width:26.0px;height:26.0px;" viewBox="0 0 24 24"><g fill="none" stroke="#2e3440" stroke-width="1.9" stroke-linecap="round" stroke-linejoin="round"><path d="M2 4v16"/><path d="M2 8h18a2 2 0 0 1 2 2v10"/><path d="M2 17h20"/><path d="M6 8v9"/></g></svg>
<svg class="r" style="left:2163.0px;top:103.5px;width:26.0px;height:26.0px;" viewBox="0 0 24 24"><g fill="none" stroke="#2e3440" stroke-width="1.9" stroke-linecap="round" stroke-linejoin="round"><circle cx="6" cy="12" r="4"/><circle cx="18" cy="12" r="4"/><line x1="6" x2="18" y1="16" y2="16"/></g></svg>
<svg class="r" style="left:2237px;top:108px;width:17px;height:17px;" viewBox="0 0 18 18"><path fill="#1f2937" d="M0 2.2C0 1 1 0 2.2 0h10.6L18 5.2v10.6c0 1.2-1 2.2-2.2 2.2H2.2C1 18 0 17 0 15.8z"/><rect x="3" y="2.6" width="9" height="4.2" rx=".8" fill="#fff"/><circle cx="9" cy="12" r="2.3" fill="#fff"/></svg>
<div class="t" style="left:2260.66px;top:104.87px;font-size:22.25px;line-height:22.25px;color:#1f2937;font-family:'Liberation Sans',sans-serif;font-weight:700;letter-spacing:-0.590px;">Save to workspace</div>
<div class="r" style="left:1075.4px;top:172px;width:14px;height:14px;background:#86efac;border-radius:50%"></div>
<svg class="r" style="left:1119.7px;top:168.3px;width:21.0px;height:21.0px;" viewBox="0 0 24 24"><g fill="none" stroke="#475569" stroke-width="2.4" stroke-linecap="round" stroke-linejoin="round"><line x1="12" x2="12" y1="2" y2="22"/><path d="M17 5H9.5a3.5 3.5 0 0 0 0 7h5a3.5 3.5 0 0 1 0 7H6"/></g></svg>
<svg class="r" style="left:1173.4px;top:168.3px;width:21.0px;height:21.0px;" viewBox="0 0 24 24"><g fill="none" stroke="#475569" stroke-width="2.4" stroke-linecap="round" stroke-linejoin="round"><line x1="12" x2="12" y1="2" y2="22"/><path d="M17 5H9.5a3.5 3.5 0 0 0 0 7h5a3.5 3.5 0 0 1 0 7H6"/></g></svg>
<svg class="r" style="left:1231.5px;top:169px;width:20.0px;height:20px;" viewBox="0 0 20 20"><path d="M10 1 18.5 5v10L10 19 1.5 15V5z" fill="#fff" stroke="#475569" stroke-width="2" stroke-linejoin="round"/><path d="M1.5 5 10 9v10L1.5 15z" fill="#475569"/><path d="M10 9 18.5 5" stroke="#475569" stroke-width="2"/></svg>
<svg class="r" style="left:1291.5px;top:168.5px;width:21.0px;height:21.0px;" viewBox="0 0 24 24"><g fill="none" stroke="#475569" stroke-width="2.6" stroke-linecap="round" stroke-linejoin="round"><path d="M3 12a9 9 0 1 0 9-9 9.75 9.75 0 0 0-6.74 2.74L3 8"/><path d="M3 3v5h5"/></g></svg>
<svg class="r" style="left:1353.1px;top:168.5px;width:21.0px;height:21.0px;" viewBox="0 0 24 24"><g fill="none" stroke="#475569" stroke-width="2.6" stroke-linecap="round" stroke-linejoin="round"><path d="M3 12a9 9 0 0 1 9-9 9.75 9.75 0 0 1 6.74 2.74L21 8"/><path d="M21 3v5h-5"/><path d="M21 12a9 9 0 0 1-9 9 9.75 9.75 0 0 1-6.74-2.74L3 16"/><path d="M8 16H3v5"/></g></svg>
<div class="t" style="left:1387.00px;top:166.95px;font-size:22.5px;line-height:22.5px;color:#374151;font-family:'Liberation Sans',sans-serif;">(</div>
<div class="t" style="left:1394.98px;top:166.95px;font-size:22.5px;line-height:22.5px;color:#5cb376;font-family:'Liberation Sans',sans-serif;letter-spacing:-0.313px;">Shellcheck</div>
<div class="t" style="left:1502.87px;top:166.95px;font-size:22.5px;line-height:22.5px;color:#374151;font-family:'Liberation Sans',sans-serif;">)</div>
<svg class="r" style="left:1553.0px;top:169.5px;width:19.0px;height:19.0px;" viewBox="0 0 24 24"><path d="M2.6 20.8 20.9 4.1" stroke="#1f2937" stroke-width="5" stroke-linecap="round"/><path d="M17.6 7.2 20.4 4.6" stroke="#fff" stroke-width="1.1" stroke-linecap="round" opacity=".85"/><g fill="#1f2937" stroke="#1f2937" stroke-width=".9" stroke-linejoin="round"><path d="M3.8 3.7Q3.8 7 7.1 7Q3.8 7 3.8 10.3Q3.8 7 0.5 7Q3.8 7 3.8 3.7Z"/><path d="M10.4 1.3000000000000003Q10.4 3.6 12.7 3.6Q10.4 3.6 10.4 5.9Q10.4 3.6 8.100000000000001 3.6Q10.4 3.6 10.4 1.3000000000000003Z"/><path d="M19.6 14.200000000000001Q19.6 17.6 23.0 17.6Q19.6 17.6 19.6 21.0Q19.6 17.6 16.200000000000003 17.6Q19.6 17.6 19.6 14.200000000000001Z"/></g></svg>
<div class="t" style="left:1580.26px;top:167.38px;font-size:22.0px;line-height:22.0px;color:#1f2937;font-family:'Liberation Sans',sans-serif;letter-spacing:-0.562px;-webkit-text-stroke:0.4px #1f2937;">AI Gen</div>
<svg class="r" style="left:2451px;top:169px;width:18px;height:20px;" viewBox="0 0 18 20"><path d="M3 0h12.5c.8 0 1.5.7 1.5 1.5V14c0 .6-.4 1.2-1 1.4v2.1c.6.2 1 .6 1 1.2 0 .7-.6 1.3-1.3 1.3H3a3 3 0 0 1-3-3V3a3 3 0 0 1 3-3z" fill="#475569"/><path d="M3 15.5h11.5v2.3H3a1.15 1.15 0 0 1 0-2.3z" fill="#fff"/><path d="M5 4.5h8M5 7.5h8" stroke="#fff" stroke-width="1.4"/></svg>
<div class="r" style="left:1052px;top:209px;width:1448px;height:3px;background:#e5e7eb"></div>
<div class="r" style="left:1052px;top:212px;width:77px;height:572px;background:#fafbfc"></div>
<div class="r" style="left:1130px;top:212.5px;width:1368px;height:30px;border:2px solid #eeeeee;border-left-width:2px"></div>
<div class="r" style="left:2474.5px;top:213px;width:1.5px;height:571px;background:#e5e7eb"></div>
<div class="r" style="left:2487px;top:525px;width:13px;height:30px;background:#1e88f0"></div>
<div class="r" style="left:1052px;top:784px;width:1448px;height:1.5px;background:#d1d5db"></div>
<div class="t" style="left:1063.16px;top:217.94px;font-size:22px;line-height:22px;color:#0b216f;font-family:'Liberation Mono',monospace;">1</div>
<div class="t" style="left:1063.66px;top:249.13px;font-size:22px;line-height:22px;color:#8c8c8c;font-family:'Liberation Mono',monospace;">2</div>
<div class="t" style="left:1063.49px;top:280.32px;font-size:22px;line-height:22px;color:#8c8c8c;font-family:'Liberation Mono',monospace;">3</div>
<div class="t" style="left:1063.22px;top:311.51px;font-size:22px;line-height:22px;color:#8c8c8c;font-family:'Liberation Mono',monospace;">4</div>
<div class="t" style="left:1063.49px;top:342.70px;font-size:22px;line-height:22px;color:#8c8c8c;font-family:'Liberation Mono',monospace;">5</div>
<div class="t" style="left:1063.53px;top:373.89px;font-size:22px;line-height:22px;color:#8c8c8c;font-family:'Liberation Mono',monospace;">6</div>
<div class="t" style="left:1063.82px;top:405.08px;font-size:22px;line-height:22px;color:#8c8c8c;font-family:'Liberation Mono',monospace;">7</div>
<div class="t" style="left:1063.55px;top:436.27px;font-size:22px;line-height:22px;color:#8c8c8c;font-family:'Liberation Mono',monospace;">8</div>
<div class="t" style="left:1063.62px;top:467.46px;font-size:22px;line-height:22px;color:#8c8c8c;font-family:'Liberation Mono',monospace;">9</div>
<div class="t" style="left:1051.11px;top:498.65px;font-size:22px;line-height:22px;color:#8c8c8c;font-family:'Liberation Mono',monospace;letter-spacing:-0.861px;">10</div>
<div class="t" style="left:1051.11px;top:529.84px;font-size:22px;line-height:22px;color:#8c8c8c;font-family:'Liberation Mono',monospace;letter-spacing:-1.151px;">11</div>
<div class="t" style="left:1051.11px;top:561.03px;font-size:22px;line-height:22px;color:#8c8c8c;font-family:'Liberation Mono',monospace;letter-spacing:-0.657px;">12</div>
<div class="t" style="left:1129.80px;top:217.94px;font-size:22px;line-height:22px;color:#008000;font-family:'Liberation Mono',monospace;letter-spacing:-0.65px;-webkit-text-stroke:0.35px #008000;"># shellcheck shell=bash</div>
<div class="t" style="left:1129.80px;top:249.13px;font-size:22px;line-height:22px;color:#008000;font-family:'Liberation Mono',monospace;letter-spacing:-0.65px;-webkit-text-stroke:0.35px #008000;"># Bash script that calls docker as a client to the host daemon</div>
<div class="t" style="left:1129.80px;top:280.32px;font-size:22px;line-height:22px;color:#008000;font-family:'Liberation Mono',monospace;letter-spacing:-0.65px;-webkit-text-stroke:0.35px #008000;"># See documentation: </div>
<div class="t" style="left:1393.35px;top:280.32px;font-size:22px;line-height:22px;color:#008000;font-family:'Liberation Mono',monospace;letter-spacing:-0.65px;-webkit-text-stroke:0.35px #008000;">https://www.windmill.dev/docs/advanced/docker</div>
<div class="t" style="left:1129.80px;top:311.51px;font-size:22px;line-height:22px;color:#000000;font-family:'Liberation Mono',monospace;letter-spacing:-0.65px;-webkit-text-stroke:0.35px #000000;">msg=</div>
<div class="t" style="left:1180.00px;top:311.51px;font-size:22px;line-height:22px;color:#a31515;font-family:'Liberation Mono',monospace;letter-spacing:-0.65px;-webkit-text-stroke:0.35px #a31515;">"${1:-world}"</div>
<div class="t" style="left:1129.80px;top:373.89px;font-size:22px;line-height:22px;color:#000000;font-family:'Liberation Mono',monospace;letter-spacing:-0.65px;-webkit-text-stroke:0.35px #000000;">IMAGE=</div>
<div class="t" style="left:1205.10px;top:373.89px;font-size:22px;line-height:22px;color:#a31515;font-family:'Liberation Mono',monospace;letter-spacing:-0.65px;-webkit-text-stroke:0.35px #a31515;">"alpine:latest"</div>
<div class="t" style="left:1129.80px;top:405.08px;font-size:22px;line-height:22px;color:#000000;font-family:'Liberation Mono',monospace;letter-spacing:-0.65px;-webkit-text-stroke:0.35px #000000;">COMMAND=</div>
<div class="t" style="left:1230.20px;top:405.08px;font-size:22px;line-height:22px;color:#a31515;font-family:'Liberation Mono',monospace;letter-spacing:-0.65px;-webkit-text-stroke:0.35px #a31515;">"/bin/echo Hello $msg"</div>
<div class="t" style="left:1129.80px;top:467.46px;font-size:22px;line-height:22px;color:#008000;font-family:'Liberation Mono',monospace;letter-spacing:-0.65px;-webkit-text-stroke:0.35px #008000;"># ensure that the image is up-to-date</div>
<div class="t" style="left:1129.80px;top:498.65px;font-size:22px;line-height:22px;color:#000000;font-family:'Liberation Mono',monospace;letter-spacing:-0.65px;-webkit-text-stroke:0.35px #000000;">docker pull </div>
<div class="t" style="left:1280.40px;top:498.65px;font-size:22px;line-height:22px;color:#001080;font-family:'Liberation Mono',monospace;letter-spacing:-0.65px;-webkit-text-stroke:0.35px #001080;">$IMAGE</div>
<div class="t" style="left:1129.80px;top:529.84px;font-size:22px;line-height:22px;color:#000000;font-family:'Liberation Mono',monospace;letter-spacing:-0.65px;-webkit-text-stroke:0.35px #000000;">docker run </div>
<div class="t" style="left:1267.85px;top:529.84px;font-size:22px;line-height:22px;color:#e01b1b;font-family:'Liberation Mono',monospace;letter-spacing:-0.65px;-webkit-text-stroke:0.35px #e01b1b;">––rm</div>
<div class="t" style="left:1318.05px;top:529.84px;font-size:22px;line-height:22px;color:#000000;font-family:'Liberation Mono',monospace;letter-spacing:-0.65px;-webkit-text-stroke:0.35px #000000;"> </div>
<div class="t" style="left:1330.60px;top:529.84px;font-size:22px;line-height:22px;color:#001080;font-family:'Liberation Mono',monospace;letter-spacing:-0.65px;-webkit-text-stroke:0.35px #001080;">$IMAGE</div>
<div class="t" style="left:1405.90px;top:529.84px;font-size:22px;line-height:22px;color:#000000;font-family:'Liberation Mono',monospace;letter-spacing:-0.65px;-webkit-text-stroke:0.35px #000000;"> </div>
<div class="t" style="left:1418.45px;top:529.84px;font-size:22px;line-height:22px;color:#001080;font-family:'Liberation Mono',monospace;letter-spacing:-0.65px;-webkit-text-stroke:0.35px #001080;">$COMMAND</div>
<div class="r" style="left:1393px;top:299px;width:564px;height:2px;background:#008000"></div>
<svg class="r" style="left:1408px;top:548px;width:18px;height:10px;" viewBox="0 0 18 10"><path d="M1 8 Q5 2 9 6 T17 3" fill="none" stroke="#1a85ff" stroke-width="1.6"/></svg>
<div class="t" style="left:1078.25px;top:796.99px;font-size:26.0px;line-height:26.0px;color:#1f2937;font-family:'Liberation Sans',sans-serif;font-weight:700;letter-spacing:-0.670px;">Step Input</div>
<div class="t" style="left:1255.71px;top:796.99px;font-size:26.0px;line-height:26.0px;color:#1f2937;font-family:'Liberation Sans',sans-serif;font-weight:700;letter-spacing:-0.602px;">Test this step</div>
<div class="t" style="left:1470.36px;top:797.41px;font-size:25.5px;line-height:25.5px;color:#1f2937;font-family:'Liberation Sans',sans-serif;font-weight:700;letter-spacing:-0.594px;">Advanced</div>
<div class="r" style="left:1052px;top:837.5px;width:1448px;height:1.5px;background:#e5e7eb"></div>
<div class="r" style="left:1052px;top:834px;width:175px;height:4px;background:#334155"></div>
<div class="t" style="left:1064.45px;top:895.10px;font-size:28px;line-height:28px;color:#1f2937;font-family:'Liberation Sans',sans-serif;font-weight:700;letter-spacing:0.423px;">msg</div>
<div class="t" style="left:1123.43px;top:898.48px;font-size:24px;line-height:24px;color:#ef4444;font-family:'Liberation Sans',sans-serif;font-weight:700;">*</div>
<div class="t" style="left:1149.95px;top:897.38px;font-size:22px;line-height:22px;color:#4b5563;font-family:'Liberation Sans',sans-serif;font-style:italic;letter-spacing:0.490px;">string</div>
<div class="r" style="left:1676px;top:882px;width:107px;height:54.5px;background:#f3f4f6;border:0px solid #f3f4f6;border-radius:8px;"></div>
<div class="r" style="left:1679px;top:885px;width:56.5px;height:48px;background:#fff;border:0px solid #fff;border-radius:7px;box-shadow:0 1px 3px rgba(0,0,0,.12)"></div>
<div class="t" style="left:1692.21px;top:898.38px;font-size:22px;line-height:22px;color:#1f2937;font-family:'Liberation Sans',sans-serif;font-weight:700;letter-spacing:0.632px;">${}</div>
<svg class="r" style="left:1751px;top:898px;width:22px;height:22px;" viewBox="0 0 22 22"><rect x="1.5" y="1.5" width="19" height="19" rx="2" fill="none" stroke="#9ca3af" stroke-width="1.6"/><path d="M13.5 5.5c-2 0-2.5 1-2.8 3l-1.4 7.5c-.3 1.5-.8 2-2 2M8 10.5h5" fill="none" stroke="#9ca3af" stroke-width="1.5" stroke-linecap="round"/></svg>
<div class="r" style="left:1827.5px;top:888px;width:76.5px;height:42.5px;background:#fff;border:1.5px solid #e5e7eb;border-radius:8px;"></div>
<svg class="r" style="left:1842.5px;top:895.8px;width:26.0px;height:26.0px;" viewBox="0 0 24 24"><g fill="none" stroke="#1f2937" stroke-width="2.1" stroke-linecap="round" stroke-linejoin="round"><path d="M12 22v-5"/><path d="M9 8V2"/><path d="M15 8V2"/><path d="M18 8v5a4 4 0 0 1-4 4h-4a4 4 0 0 1-4-4V8Z"/></g></svg>
<svg class="r" style="left:1870.0px;top:899.0px;width:20.0px;height:20.0px;" viewBox="0 0 24 24"><g fill="none" stroke="#1f2937" stroke-width="2.7" stroke-linecap="round" stroke-linejoin="round"><path d="M5 12h14"/><path d="m12 5 7 7-7 7"/></g></svg>
<div class="r" style="left:1065.5px;top:958.3px;width:838.5px;height:47.200000000000045px;background:#fff;border:1.5px solid #71757d;border-radius:6px;"></div>
<div class="r" style="left:1071px;top:960px;width:24px;height:43px;background:#f6f8fb"></div>
<div class="r" style="left:1095px;top:960.4px;width:781px;height:35.4px;border:2px solid #eeeeee;border-left:0"></div>
<div class="r" style="left:1876px;top:960px;width:21px;height:36px;background:#fafafa;border-left:1px solid #e5e7eb"></div>
<div class="r" style="left:1877px;top:960px;width:19px;height:3px;background:#2e3440"></div>
<div class="t" style="left:1094.45px;top:966.91px;font-size:24px;line-height:24px;color:#000000;font-family:'Liberation Mono',monospace;letter-spacing:0.536px;-webkit-text-stroke:0.35px #000;">world</div>
<div class="r" style="left:1919.5px;top:839px;width:2.0px;height:517px;background:#d3d5d9"></div>
<div class="r" style="left:1935.3px;top:853.6px;width:340.0000000000002px;height:41.39999999999998px;background:#dbeafe;border:0px solid #dbeafe;border-radius:7px;"></div>
<svg class="r" style="left:1952.0px;top:862.0px;width:24.0px;height:24.0px;" viewBox="0 0 24 24"><g fill="none" stroke="#1e40af" stroke-width="2.5" stroke-linecap="round" stroke-linejoin="round"><path d="m12 19-7-7 7-7"/><path d="M19 12H5"/></g></svg>
<div class="t" style="left:1979.79px;top:860.74px;font-size:27px;line-height:27px;color:#1e40af;font-family:'Liberation Sans',sans-serif;letter-spacing:-0.247px;-webkit-text-stroke:0.5px #1e40af;">Edit or connect an input</div>
<div class="r" style="left:1935.3px;top:909.4px;width:550.2px;height:50.89999999999998px;background:#fff;border:1.5px solid #d1d5db;border-radius:8px;"></div>
<div class="t" style="left:1949.77px;top:921.54px;font-size:27px;line-height:27px;color:#6b7280;font-family:'Liberation Sans',sans-serif;letter-spacing:-0.608px;">Search prop...</div>
<div class="t" style="left:1933.24px;top:992.78px;font-size:26.25px;line-height:26.25px;color:#1f2937;font-family:'Liberation Sans',sans-serif;font-weight:700;letter-spacing:-0.682px;">Flow Input</div>
<div class="t" style="left:1947.70px;top:1035.38px;font-size:22px;line-height:22px;color:#4b5563;font-family:'Liberation Sans',sans-serif;letter-spacing:-0.260px;">No items ([])</div>
<div class="t" style="left:1934.82px;top:1087.48px;font-size:26.25px;line-height:26.25px;color:#1f2937;font-family:'Liberation Sans',sans-serif;font-weight:700;letter-spacing:-0.611px;">Variables</div>
<div class="r" style="left:1935px;top:1121px;width:60.40000000000009px;height:44px;background:#fff;border:2px solid #3b6fe0;border-radius:6px;"></div>
<div class="t" style="left:1943.63px;top:1133.38px;font-size:22px;line-height:22px;color:#1f2937;font-family:'Liberation Sans',sans-serif;letter-spacing:2.433px;">{...}</div>
<div class="t" style="left:1933.26px;top:1188.49px;font-size:26.0px;line-height:26.0px;color:#1f2937;font-family:'Liberation Sans',sans-serif;font-weight:700;letter-spacing:-0.682px;">Resources</div>
<div class="r" style="left:1935px;top:1222px;width:60.40000000000009px;height:44px;background:#fff;border:2px solid #3b6fe0;border-radius:6px;"></div>
<div class="t" style="left:1943.63px;top:1234.38px;font-size:22px;line-height:22px;color:#1f2937;font-family:'Liberation Sans',sans-serif;letter-spacing:2.433px;">{...}</div>
<div class="r" style="left:83px;top:1356.5px;width:967px;height:1.5px;background:#e5e7eb"></div>
</body></html>
